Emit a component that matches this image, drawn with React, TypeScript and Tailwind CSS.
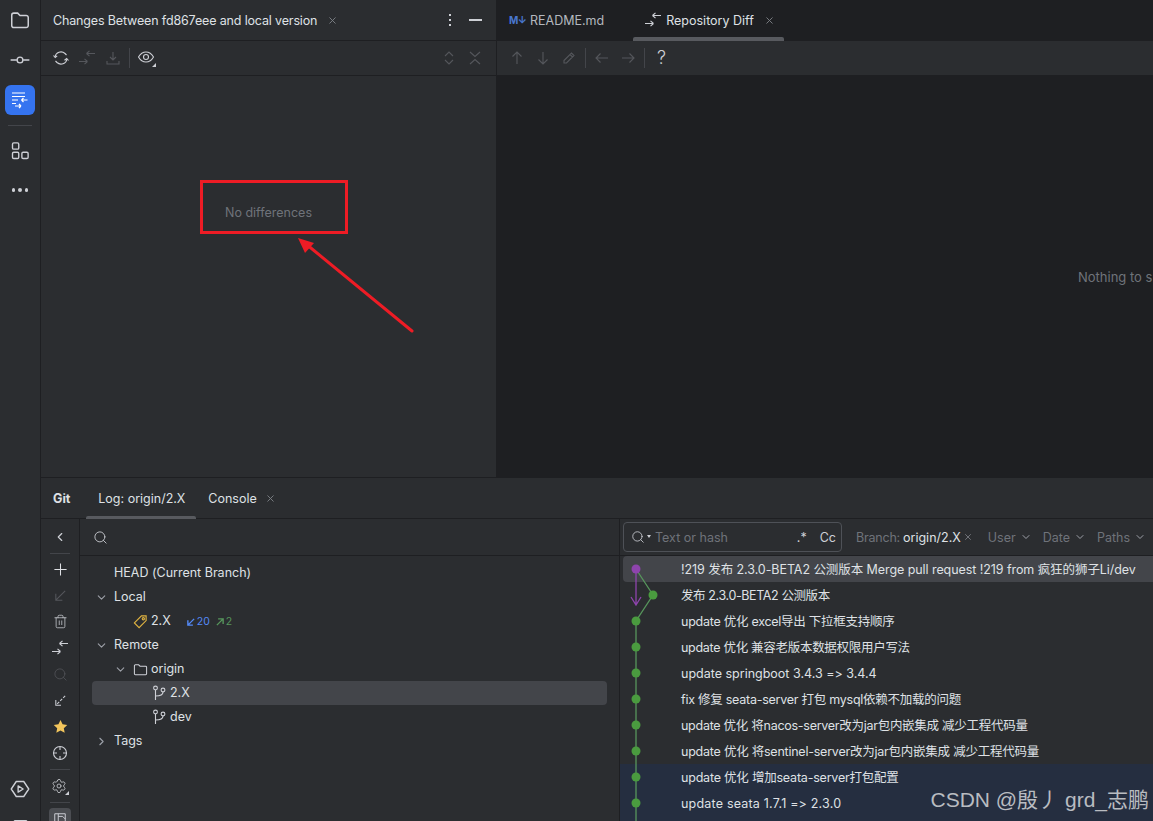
import { ChevronDown, ChevronLeft, ChevronRight, Search, Settings, Trash2, X } from "lucide-react";

const ui = "font-['Inter','Noto_Sans_CJK_SC',sans-serif] [font-feature-settings:'calt'_0]";

const commits = [
  { text: "!219 发布 2.3.0-BETA2 公测版本 Merge pull request !219 from 疯狂的狮子Li/dev", cls: "ml-[3px] rounded-l-[4px] bg-[#43454a] pl-[58px] tracking-[-0.07px]" },
  { text: "发布 2.3.0-BETA2 公测版本", cls: "pl-[61px] tracking-[-0.39px]" },
  { text: "update 优化 excel导出 下拉框支持顺序", cls: "pl-[61px] tracking-[-0.26px]" },
  { text: "update 优化 兼容老版本数据权限用户写法", cls: "pl-[61px] tracking-[-0.29px]" },
  { text: "update springboot 3.4.3 => 3.4.4", cls: "pl-[61px]" },
  { text: "fix 修复 seata-server 打包 mysql依赖不加载的问题", cls: "pl-[61px] tracking-[-0.25px]" },
  { text: "update 优化 将nacos-server改为jar包内嵌集成 减少工程代码量", cls: "pl-[61px] tracking-[-0.27px]" },
  { text: "update 优化 将sentinel-server改为jar包内嵌集成 减少工程代码量", cls: "pl-[61px] tracking-[-0.23px]" },
  { text: "update 优化 增加seata-server打包配置", cls: "bg-[#252e40] pl-[61px] tracking-[-0.21px]" },
  { text: "update seata 1.7.1 => 2.3.0", cls: "bg-[#252e40] pl-[61px] tracking-[0.2px]" },
  { text: "", cls: "bg-[#252e40]" },
];

function Ico({ size = 16, color = "#ced0d6", children }: { size?: number; color?: string; children: React.ReactNode }) {
  return (
    <svg width={size} height={size} viewBox="0 0 16 16" fill="none" stroke={color} strokeWidth="1.1" className="shrink-0">
      {children}
    </svg>
  );
}

const Compare = ({ color = "#ced0d6" }: { color?: string }) => (
  <Ico color={color}>
    <path d="M16 3.500H7.500M7.500 3.500L10.500 0.800M7.500 3.500L10.500 6.200" />
    <path d="M0 11.500H8.500M8.500 11.500L5.500 8.800M8.500 11.500L5.500 14.200" />
  </Ico>
);

const BranchIcon = () => (
  <Ico>
    <circle cx="4.500" cy="3" r="1.900" />
    <circle cx="12" cy="5" r="1.900" />
    <path d="M4.500 5v10M4.500 11c4 0 7.500-.5 7.500-4" />
  </Ico>
);

const Corner = () => (
  <span className="absolute bottom-0 right-0 h-0 w-0 border-b-[4px] border-l-[4px] border-b-[#ced0d6] border-l-transparent" />
);

function LeftRail() {
  return (
    <aside className="flex w-[41px] shrink-0 flex-col items-center overflow-hidden border-r border-[#1e1f22] bg-[#2b2d30]">
      <div className="mt-[9px] shrink-0">
        <Ico size={22}>
          <path d="M2 4.500a1.500 1.500 0 0 1 1.500-1.500h2.800l1.700 1.700h4.500a1.500 1.500 0 0 1 1.500 1.500v5.800a1.500 1.500 0 0 1-1.500 1.500h-9a1.500 1.500 0 0 1-1.500-1.500z" />
        </Ico>
      </div>
      <div className="mt-[19px] shrink-0">
        <Ico size={20}>
          <circle cx="8" cy="8" r="2.300" />
          <path d="M0.500 8h5M10.500 8h5" />
        </Ico>
      </div>
      <div className="mt-[15px] flex h-[30px] w-[30px] shrink-0 items-center justify-center rounded-[6px] bg-[#3574f0]">
        <svg width="18" height="18" viewBox="0 0 18 18" fill="none" stroke="#fff" strokeWidth="1.200">
          <path d="M1 2h13M1 5.500h13M1 9h6M1 12.500h4M16.500 9h-6M10.500 9l2-2M10.500 9l2 2M4 15h6M10 15l-2-2M10 15l-2 2" />
        </svg>
      </div>
      <div className="mt-[10px] h-px w-[24px] shrink-0 bg-[#43454a]" />
      <div className="mt-[15px] shrink-0">
        <Ico size={20}>
          <rect x="2" y="1.500" width="5" height="5" rx="1" />
          <rect x="2" y="9" width="5" height="5" rx="1" />
          <rect x="9.500" y="9" width="5" height="5" rx="1" />
        </Ico>
      </div>
      <div className="mt-[27px] flex shrink-0 gap-[3px]">
        <span className="h-[3.500px] w-[3.500px] rounded-full bg-[#ced0d6]" />
        <span className="h-[3.500px] w-[3.500px] rounded-full bg-[#ced0d6]" />
        <span className="h-[3.500px] w-[3.500px] rounded-full bg-[#ced0d6]" />
      </div>
      <div className="mt-auto shrink-0">
        <Ico size={20}>
          <path d="M5 2h6l4 6-4 6H5L1 8z" strokeLinejoin="round" />
          <path d="M6.500 5.500v5l4-2.500z" strokeLinejoin="round" />
        </Ico>
      </div>
      <div className="mb-[-14px] mt-[21px] h-[15px] w-[15px] shrink-0 rounded-t-[2px] border border-[#ced0d6]" />
    </aside>
  );
}

function ChangesPanel() {
  return (
    <section className="flex w-[456px] shrink-0 flex-col border-r border-[#1e1f22] bg-[#2b2d30]">
      <header className="flex h-[41px] shrink-0 items-center border-b border-[#1e1f22] pl-[12px] pr-[14px]">
        <span className="pt-[2px] text-[12.500px] tracking-[-0.15px] text-[#dfe1e5]">Changes Between fd867eee and local version</span>
        <X size={11} color="#7e8187" className="ml-[10px]" />
        <span className="ml-auto flex flex-col gap-[3px]">
          <span className="h-[2px] w-[2px] bg-[#ced0d6]" />
          <span className="h-[2px] w-[2px] bg-[#ced0d6]" />
          <span className="h-[2px] w-[2px] bg-[#ced0d6]" />
        </span>
        <span className="ml-[18px] h-[1.500px] w-[13px] bg-[#ced0d6]" />
      </header>
      <div className="flex h-[35px] shrink-0 items-center gap-[10px] border-b border-[#1e1f22] pl-[12px] pr-[13px]">
        <Ico>
          <path d="M2 7a6 6 0 0 1 10-3.500L13.500 5M14 9a6 6 0 0 1-10 3.500L2.500 11" />
          <path d="M0.500 5.500l1.700 2 2-1.700M11.500 10.300l2.200-1.800 1.800 2" />
        </Ico>
        <Compare color="#55575c" />
        <Ico color="#55575c">
          <path d="M8 2v8M5 7l3 3 3-3M2 11v3h12v-3" />
        </Ico>
        <span className="mx-[-2px] h-[20px] w-px bg-[#43454a]" />
        <span className="relative h-[18px] w-[18px]">
          <Ico>
            <path d="M0.500 8c2-3.500 4.800-5 7.500-5s5.500 1.500 7.500 5c-2 3.500-4.800 5-7.500 5s-5.500-1.500-7.500-5z" />
            <circle cx="8" cy="8" r="2.500" />
          </Ico>
          <Corner />
        </span>
        <span className="ml-auto">
          <Ico color="#55575c">
            <path d="M4 6l4-4 4 4M4 10l4 4 4-4" />
          </Ico>
        </span>
        <Ico color="#55575c">
          <path d="M3 2l5 4.500L13 2M3 14l5-4.500 5 4.500" />
        </Ico>
      </div>
      <div className="flex flex-1 items-start justify-center pt-[129px] text-[12.500px] leading-[15px] text-[#6f737a]">
        No differences
      </div>
    </section>
  );
}

function DiffPanel() {
  return (
    <section className="flex min-w-0 flex-1 flex-col bg-[#1e1f22]">
      <div className="flex h-[41px] shrink-0 items-center border-b border-[#1e1f22] pl-[12px]">
        <span className="w-[16px] whitespace-nowrap text-[10px] font-bold tracking-[-0.5px] text-[#4a78d0]">M↓</span>
        <span className="ml-[5px] pt-[2px] text-[12.500px] text-[#b4b8bf]">README.md</span>
        <div className="relative ml-[29px] flex h-[41px] w-[151px] items-center pl-[12px]">
          <Compare />
          <span className="ml-[5px] pt-[2px] text-[12.500px] text-[#dfe1e5]">Repository Diff</span>
          <X size={11} color="#7e8187" className="ml-[10px]" />
          <span className="absolute inset-x-0 bottom-0 h-[4px] rounded-t-[2px] bg-[#585a5f]" />
        </div>
      </div>
      <div className="flex h-[35px] shrink-0 items-center gap-[10px] border-b border-[#1e1f22] bg-[#2b2d30] pl-[12px]">
        <Ico color="#55575c"><path d="M8 14V2M3.500 6.500L8 2l4.500 4.500" /></Ico>
        <Ico color="#55575c"><path d="M8 2v12M3.500 9.500L8 14l4.500-4.500" /></Ico>
        <Ico color="#55575c"><path d="M3 10.500L10.500 3l2.500 2.500L5.500 13H3zM9 4.500l2.500 2.500" /></Ico>
        <span className="mx-[-2px] h-[20px] w-px bg-[#43454a]" />
        <Ico color="#55575c"><path d="M14 8H2M6.500 3.500L2 8l4.500 4.500" /></Ico>
        <Ico color="#55575c"><path d="M2 8h12M9.500 3.500L14 8l-4.500 4.500" /></Ico>
        <span className="mx-[-2px] h-[20px] w-px bg-[#43454a]" />
        <span className="ml-[4px] text-[18px] font-light leading-none text-[#ced0d6]">?</span>
      </div>
      <div className="flex flex-1 items-center overflow-hidden whitespace-nowrap pl-[581px] pt-[2px] text-[13px] text-[#6f737a]">
        Nothing to show
      </div>
    </section>
  );
}

function BranchTree() {
  return (
    <div className="flex w-[540px] shrink-0 flex-col border-r border-[#1e1f22] text-[12.500px] text-[#dfe1e5]">
      <div className="flex h-[37px] shrink-0 items-center border-b border-[#1e1f22] pl-[13px]">
        <Search size={15} color="#ced0d6" strokeWidth={1.400} />
      </div>
      <div className="flex flex-col pl-[12px] pr-[12px] pt-[5px]">
        <div className="flex h-[24px] items-center pl-[22px]">HEAD (Current Branch)</div>
        <div className="flex h-[24px] items-center gap-[6px] pl-[3px]">
          <ChevronDown size={13} color="#9da0a8" />
          Local
        </div>
        <div className="flex h-[24px] items-center pl-[41px]">
          <svg width="15" height="15" viewBox="0 0 16 16" fill="none" stroke="#e0b341" strokeWidth="1.200" className="shrink-0">
            <path d="M1.500 9.500L9 2h5v5l-7.500 7.500z" />
            <circle cx="11" cy="5" r="1.200" />
          </svg>
          <span className="ml-[3px]">2.X</span>
          <span className="ml-[15px] flex items-center gap-[1px] pt-[2px] text-[10.500px] text-[#548af7]">
            <Ico size={10} color="#548af7"><path d="M13 3L3 13M3 5v8h8" strokeWidth="2.200" /></Ico>
            20
          </span>
          <span className="ml-[5px] flex items-center gap-[1px] pt-[2px] text-[10.500px] text-[#57965c]">
            <Ico size={10} color="#57965c"><path d="M3 13L13 3M5 3h8v8" strokeWidth="2.200" /></Ico>
            2
          </span>
        </div>
        <div className="flex h-[24px] items-center gap-[6px] pl-[3px]">
          <ChevronDown size={13} color="#9da0a8" />
          Remote
        </div>
        <div className="flex h-[24px] items-center pl-[22px]">
          <ChevronDown size={13} color="#9da0a8" />
          <span className="ml-[6px]">
            <Ico size={15}>
              <path d="M1.500 4a1 1 0 0 1 1-1h3.500l1.500 1.500h6a1 1 0 0 1 1 1v7a1 1 0 0 1-1 1h-11a1 1 0 0 1-1-1z" />
            </Ico>
          </span>
          <span className="ml-[3px]">origin</span>
        </div>
        <div className="flex h-[24px] items-center rounded-[4px] bg-[#43454a] pl-[59px]">
          <BranchIcon />
          <span className="ml-[3px]">2.X</span>
        </div>
        <div className="flex h-[24px] items-center pl-[59px]">
          <BranchIcon />
          <span className="ml-[3px]">dev</span>
        </div>
        <div className="flex h-[24px] items-center gap-[6px] pl-[3px]">
          <ChevronRight size={13} color="#9da0a8" />
          Tags
        </div>
      </div>
    </div>
  );
}

function LogTable() {
  return (
    <div className="flex min-w-0 flex-1 flex-col text-[12.500px] text-[#dfe1e5]">
      <div className="flex h-[37px] shrink-0 items-center border-b border-[#1e1f22] pl-[3px]">
        <div className="flex h-[30px] w-[219px] items-center rounded-[4px] border border-[#4e5157] pl-[7px] pr-[5px]">
          <span className="relative h-[15px] w-[20px] shrink-0">
            <Search size={14} color="#ced0d6" strokeWidth={1.400} />
            <span className="absolute right-0 top-[5px] h-0 w-0 border-x-[2.500px] border-t-[3px] border-x-transparent border-t-[#ced0d6]" />
          </span>
          <span className="ml-[4px] pt-[2px] text-[#6f737a]">Text or hash</span>
          <span className="ml-auto pt-[2px] text-[#ced0d6]">.*</span>
          <span className="ml-[13px] pt-[2px] text-[#ced0d6]">Cc</span>
        </div>
        <span className="ml-[14px] whitespace-nowrap pt-[2px] tracking-[-0.2px] text-[#6f737a]">Branch:</span>
        <span className="ml-[3px] whitespace-nowrap pt-[2px]">origin/2.X</span>
        <X size={10} color="#7e8187" className="ml-[2px] shrink-0" />
        <span className="ml-[15px] pt-[2px] text-[#6f737a]">User</span>
        <ChevronDown size={12} color="#9da0a8" className="ml-[4px] shrink-0" />
        <span className="ml-[11px] pt-[2px] text-[#6f737a]">Date</span>
        <ChevronDown size={12} color="#9da0a8" className="ml-[4px] shrink-0" />
        <span className="ml-[11px] pt-[2px] text-[#6f737a]">Paths</span>
        <ChevronDown size={12} color="#9da0a8" className="ml-[4px] shrink-0" />
      </div>
      <div className="relative flex flex-col">
        {commits.map((c, i) => (
          <div key={i} className={`flex h-[26px] items-center whitespace-nowrap pt-[2px] ${c.cls}`}>
            {c.text}
          </div>
        ))}
        <svg width="40" height="270" viewBox="0 0 40 270" fill="none" className="absolute left-0 top-0">
          <path d="M16 13L33 39L16 65V270" stroke="#57965c" strokeWidth="1.300" />
          <path d="M16 13V49M11 41l5 8 5-8" stroke="#8e44ad" strokeWidth="1.300" />
          <circle cx="16" cy="13" r="4.500" fill="#8e44ad" />
          <circle cx="33" cy="39" r="4.500" fill="#4a9b3f" />
          {[65, 91, 117, 143, 169, 195, 221, 247].map((y) => (
            <circle key={y} cx="16" cy={y} r="4.500" fill="#4a9b3f" />
          ))}
        </svg>
      </div>
    </div>
  );
}

function GitToolWindow() {
  return (
    <section className="flex h-[344px] shrink-0 flex-col border-t border-[#1e1f22] bg-[#2b2d30]">
      <div className="flex h-[41px] shrink-0 items-center border-b border-[#1e1f22] text-[12.500px] text-[#dfe1e5]">
        <span className="ml-[12px] pt-[2px] font-bold">Git</span>
        <div className="relative ml-[16px] flex h-[41px] w-[110px] items-center justify-center pl-[1px] pt-[2px]">
          Log: origin/2.X
          <span className="absolute inset-x-0 bottom-0 h-[3px] rounded-t-[2px] bg-[#585a5f]" />
        </div>
        <span className="ml-[12px] pt-[2px]">Console</span>
        <X size={11} color="#7e8187" className="ml-[8px]" />
      </div>
      <div className="flex min-h-0 flex-1">
        <div className="flex w-[39px] shrink-0 flex-col items-center overflow-hidden border-r border-[#1e1f22] pt-[11px]">
          <ChevronLeft size={14} color="#ced0d6" className="shrink-0" />
          <div className="mt-[9px] h-px w-[20px] shrink-0 bg-[#43454a]" />
          <div className="mt-[8px] flex shrink-0 flex-col items-center gap-[11px]">
            <Ico size={15} color="#dfe1e5"><path d="M8 1.500V14.500M1.500 8H14.500" /></Ico>
            <Ico size={15} color="#55575c"><path d="M13 3L3 13M3 6v7h7" /></Ico>
            <Trash2 size={15} color="#ced0d6" strokeWidth={1.200} />
            <Compare />
            <Search size={15} color="#55575c" strokeWidth={1.200} />
            <Ico size={15}>
              <path d="M13 3L4 12" strokeDasharray="3 1.500" />
              <path d="M3 7.500V13H8.500" />
            </Ico>
            <svg width="15" height="15" viewBox="0 0 24 24" fill="#f2c55c" className="shrink-0">
              <path d="M12 1.500l3.300 6.900 7.500 1-5.500 5.200 1.400 7.500L12 18.500l-6.700 3.600 1.400-7.500L1.200 9.400l7.500-1z" />
            </svg>
            <Ico size={16}>
              <circle cx="8" cy="8" r="6.500" />
              <path d="M8 1.500v3.500M8 11v3.500M1.500 8H5M11 8h3.500" />
            </Ico>
          </div>
          <div className="mt-[8px] h-px w-[20px] shrink-0 bg-[#43454a]" />
          <div className="relative mt-[8px] h-[17px] w-[18px] shrink-0">
            <Settings size={16} color="#ced0d6" strokeWidth={1.200} />
            <Corner />
          </div>
          <div className="mt-[7px] h-px w-[20px] shrink-0 bg-[#43454a]" />
          <div className="mt-[5px] flex h-[26px] w-[22px] shrink-0 justify-center rounded-[4px] bg-[#4b4d52] pt-[4px]">
            <Ico size={14}>
              <path d="M2 2h12v12H2zM6 2v12M6 5h5l3 3" />
            </Ico>
          </div>
        </div>
        <BranchTree />
        <LogTable />
      </div>
    </section>
  );
}

export default function App() {
  return (
    <div className={`relative flex h-[821px] w-[1153px] overflow-hidden bg-[#2b2d30] ${ui}`}>
      <LeftRail />
      <div className="flex min-w-0 flex-1 flex-col">
        <div className="flex min-h-0 flex-1">
          <ChangesPanel />
          <DiffPanel />
        </div>
        <GitToolWindow />
      </div>
      {/* red annotation */}
      <div className="pointer-events-none absolute left-[200px] top-[180px] h-[54px] w-[148px] border-[3px] border-[#ee1c25]" />
      <svg width="130" height="110" viewBox="0 0 130 110" fill="none" className="pointer-events-none absolute left-[292px] top-[230px]">
        <path d="M120 101L14 14" stroke="#ee1c25" strokeWidth="3" strokeLinecap="round" />
        <path d="M6 8L22 13L13 23z" fill="#ee1c25" />
      </svg>
      {/* CSDN watermark */}
      <span className="absolute bottom-[11px] right-[4px] whitespace-nowrap font-['Liberation_Sans','Noto_Sans_CJK_SC',sans-serif] text-[21px] leading-none text-[#b9bcc1]">
        CSDN @殷丿 grd_志鹏
      </span>
    </div>
  );
}
